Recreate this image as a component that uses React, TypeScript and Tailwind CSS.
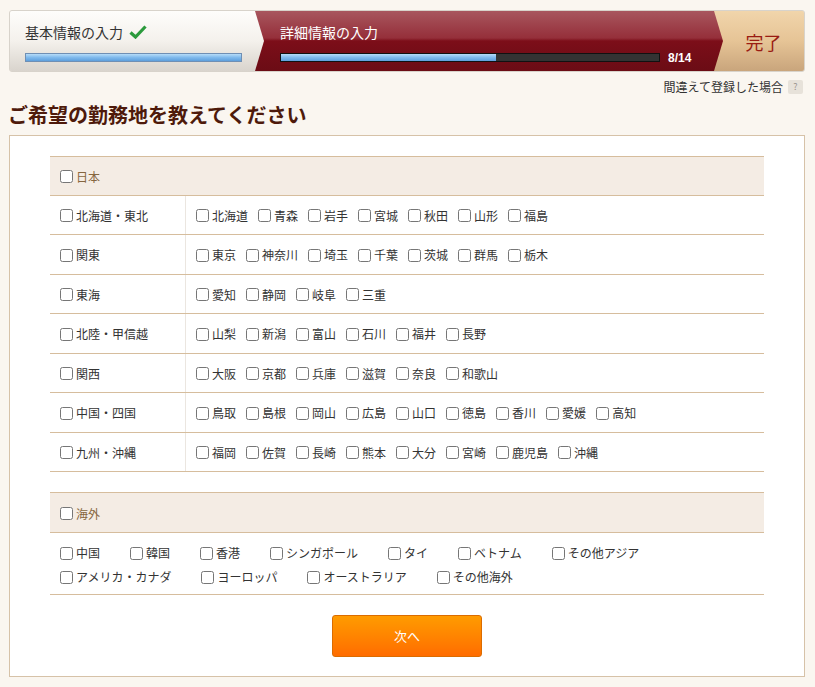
const font = "font-['Noto_Sans_CJK_JP','Noto_Sans',sans-serif]";

const domestic: { area: string; prefs: string[] }[] = [
  { area: "北海道・東北", prefs: ["北海道", "青森", "岩手", "宮城", "秋田", "山形", "福島"] },
  { area: "関東", prefs: ["東京", "神奈川", "埼玉", "千葉", "茨城", "群馬", "栃木"] },
  { area: "東海", prefs: ["愛知", "静岡", "岐阜", "三重"] },
  { area: "北陸・甲信越", prefs: ["山梨", "新潟", "富山", "石川", "福井", "長野"] },
  { area: "関西", prefs: ["大阪", "京都", "兵庫", "滋賀", "奈良", "和歌山"] },
  { area: "中国・四国", prefs: ["鳥取", "島根", "岡山", "広島", "山口", "徳島", "香川", "愛媛", "高知"] },
  { area: "九州・沖縄", prefs: ["福岡", "佐賀", "長崎", "熊本", "大分", "宮崎", "鹿児島", "沖縄"] },
];

const overseas = [
  "中国", "韓国", "香港", "シンガポール", "タイ", "ベトナム", "その他アジア",
  "アメリカ・カナダ", "ヨーロッパ", "オーストラリア", "その他海外",
];

function Check({ label, className = "" }: { label: string; className?: string }) {
  return (
    <label className={`flex items-center whitespace-nowrap ${className}`}>
      <input type="checkbox" className="w-[13px] h-[13px] mr-[3px] shrink-0" />
      <span>{label}</span>
    </label>
  );
}

function Bar({ pct, dark }: { pct: number; dark?: boolean }) {
  return (
    <div
      className={`h-[9px] border ${dark ? "border-[#111] bg-[#333]" : "border-[#6f8fb4] bg-[#8cc0ec]"}`}
    >
      <div
        className="h-full bg-gradient-to-b from-[#b6dcf8] via-[#7fb9ec] to-[#5d9fdc]"
        style={{ width: `${pct}%` }}
      />
    </div>
  );
}

function Steps() {
  return (
    <div className="flex h-[62px] border border-[#d8d3cb] rounded-[3px] overflow-hidden bg-[#e8e2d8]">
      <div className="relative z-30 w-[254px] shrink-0 pl-[15px] pt-[12px] bg-gradient-to-b from-[#fefdfb] via-[#f4f1ec] to-[#d9d4cd] [clip-path:polygon(0_0,calc(100%-9px)_0,100%_50%,calc(100%-9px)_100%,0_100%)]">
        <div className="flex items-center h-[18px] text-[14px] text-[#333]">
          基本情報の入力
          <svg width="18" height="14" viewBox="0 0 18 14" className="ml-[6px]">
            <path d="M1.5 7.5 L6.5 12 L16.5 1.5" fill="none" stroke="#2b9a3c" strokeWidth="3.2" />
          </svg>
        </div>
        <div className="w-[217px] mt-[12px]">
          <Bar pct={100} />
        </div>
      </div>
      <div className="relative z-20 -ml-[9px] w-[468px] shrink-0 pl-[25px] pt-[12px] bg-[linear-gradient(#a8565e_0%,#952f3a_45%,#7c0e19_50%,#6b0c15_100%)] [clip-path:polygon(0_0,calc(100%-9px)_0,100%_50%,calc(100%-9px)_100%,0_100%)]">
        <div className="flex items-center h-[18px] text-[14px] text-white">詳細情報の入力</div>
        <div className="flex items-center h-[9px] mt-[12px]">
          <div className="w-[380px]">
            <Bar pct={57} dark />
          </div>
          <span className="ml-[8px] leading-[12px] text-[12px] font-bold text-white font-['Liberation_Sans',sans-serif]">8/14</span>
        </div>
      </div>
      <div className="relative z-10 -ml-[9px] flex-1 pl-[9px] pt-[2px] flex items-center justify-center bg-gradient-to-b from-[#f1d5ab] via-[#e6c496] to-[#c9a57c]">
        <span className="text-[18px] text-[#9a1c12]">完了</span>
      </div>
    </div>
  );
}

export default function App() {
  return (
    <div className={`min-h-[687px] bg-[#faf6f0] pl-[9px] pr-[10px] pt-[10px] pb-[10px] text-[#333] ${font}`}>
      <Steps />

      <div className="flex justify-end items-center mt-[7px] h-[16px] pr-[2px] text-[12px]">
        <span>間違えて登録した場合</span>
        <span className="ml-[5px] w-[15px] h-[14px] rounded-[2px] bg-[#e7e2da] text-[#9a958e] text-[9px] flex items-center justify-center">?</span>
      </div>

      <h1 className="mt-[6px] h-[28px] leading-[28px] text-[20px] font-bold text-[#4e1a0b] -ml-[1px]">
        ご希望の勤務地を教えてください
      </h1>

      <div className="mt-[6px] bg-white border border-[#d6c2a8] px-[40px] pt-[20px] pb-[19px] text-[12px]">
        <div className="border-t border-[#d6bd9d]">
          <div className="h-[38.5px] flex items-center pl-[10px] pt-[2px] bg-[#f4ece4] border-b border-[#d6bd9d] text-[#86663f]">
            <Check label="日本" />
          </div>
          {domestic.map((row) => (
            <div key={row.area} className="h-[39.5px] flex border-b border-[#d6bd9d]">
              <div className="w-[136px] shrink-0 flex items-center pl-[10px] pt-[2px] border-r border-[#ebe6e0]">
                <Check label={row.area} />
              </div>
              <div className="flex items-center pl-[10px] pt-[2px] gap-x-[10px]">
                {row.prefs.map((p) => (
                  <Check key={p} label={p} />
                ))}
              </div>
            </div>
          ))}
        </div>

        <div className="mt-[20px] border-t border-[#d6bd9d]">
          <div className="h-[40px] flex items-center pl-[10px] pt-[2px] bg-[#f4ece4] border-b border-[#d6bd9d] text-[#86663f]">
            <Check label="海外" />
          </div>
          <div className="flex flex-wrap px-[10px] pt-[8px] pb-[5px] gap-x-[30px] border-b border-[#d6bd9d]">
            {overseas.map((c) => (
              <Check key={c} label={c} className="h-[24px]" />
            ))}
          </div>
        </div>

        <div className="flex justify-center mt-[20px]">
          <button className="w-[150px] h-[42px] rounded-[3px] border border-[#db6c00] bg-gradient-to-b from-[#ff9b00] to-[#ff6c00] text-white text-[13px]">
            次へ
          </button>
        </div>
      </div>
    </div>
  );
}
